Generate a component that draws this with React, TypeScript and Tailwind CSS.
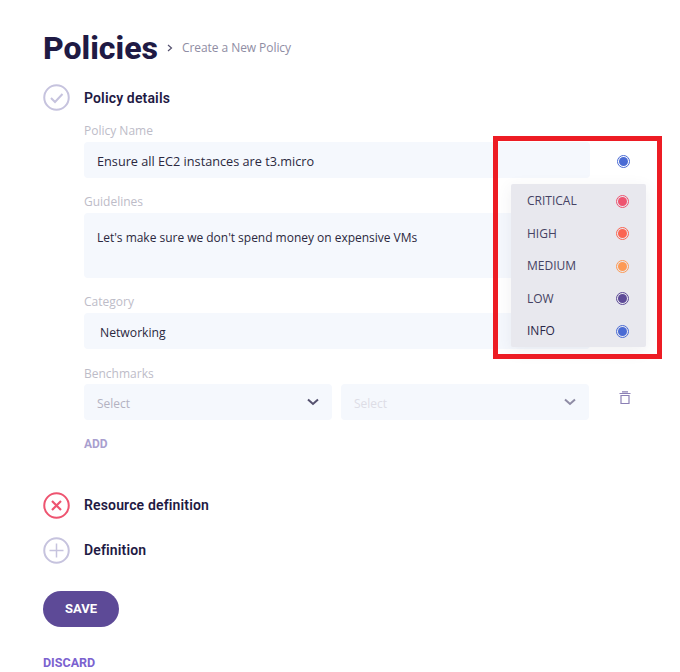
import React from "react";

const bodyFont = "font-['Open_Sans','Noto_Sans',sans-serif]";

function Dot({ ring, fill }: { ring: string; fill: string }) {
  return (
    <span className={`flex h-[13px] w-[13px] items-center justify-center rounded-full border ${ring}`}>
      <span className={`block h-[9px] w-[9px] rounded-full ${fill}`} />
    </span>
  );
}

function Chevron({ color }: { color: string }) {
  return (
    <svg width="12" height="8" viewBox="0 0 12 8" fill="none" stroke={color} strokeWidth="2">
      <path d="M1 1.5 L6 6 L11 1.5" />
    </svg>
  );
}

function SectionHead({ icon, title, className = "", titleClass = "" }: { icon: React.ReactNode; title: string; className?: string; titleClass?: string }) {
  return (
    <div className={`flex h-[27px] items-center gap-[14px] ${className}`}>
      {icon}
      <span className={`font-['Roboto',sans-serif] text-[14px] font-semibold tracking-[0.15px] text-[#1f1a44] ${titleClass}`}>{title}</span>
    </div>
  );
}

function Ring({ color, children }: { color: string; children: React.ReactNode }) {
  return (
    <svg width="27" height="27" viewBox="0 0 27 27" fill="none" stroke={color} className="shrink-0">
      <circle cx="13.5" cy="13.5" r="12.25" strokeWidth="2" />
      {children}
    </svg>
  );
}

function Label({ children }: { children: React.ReactNode }) {
  return <div className="text-[12px] leading-[16px] text-[#bdbcc8]">{children}</div>;
}

const levels = [
  { name: "CRITICAL", ring: "border-[#ee5470]", fill: "bg-[#ee5470]", text: "text-[#454263]" },
  { name: "HIGH", ring: "border-[#fb6552]", fill: "bg-[#fb6552]", text: "text-[#454263]" },
  { name: "MEDIUM", ring: "border-[#fd9a55]", fill: "bg-[#fd9a55]", text: "text-[#454263]" },
  { name: "LOW", ring: "border-[#5d4a97]", fill: "bg-[#5d4a97]", text: "text-[#454263]" },
  { name: "INFO", ring: "border-[#4a6bd4]", fill: "bg-[#4a6bd4]", text: "text-[#2a2648]" },
];

export default function App() {
  return (
    <div className={`relative h-[672px] w-[680px] overflow-hidden bg-white pl-[43px] pt-[29px] ${bodyFont}`}>
      <div className="flex h-[38px] items-center">
        <h1 className="font-['Roboto',sans-serif] text-[32px] font-extrabold leading-[38px] text-[#1f1a44]">Policies</h1>
        <svg width="6" height="8" viewBox="0 0 6 8" fill="none" stroke="#55516f" strokeWidth="1.2" className="ml-[9px] mr-[9px]">
          <path d="M1 1 L4.5 4 L1 7" />
        </svg>
        <span className="text-[12px] tracking-[-0.06px] text-[#8f8da3]">Create a New Policy</span>
      </div>

      <SectionHead
        className="mt-[17px]"
        titleClass="pt-[1px]"
        title="Policy details"
        icon={
          <Ring color="#c6c3de">
            <path d="M8 14 L12 18 L19.5 10" stroke="#c6c3de" strokeWidth="2" />
          </Ring>
        }
      />

      <div className="ml-[41px] w-[506px]">
        <div className="mt-[12px]"><Label>Policy Name</Label></div>
        <div className="mt-[3px] flex h-[36px] items-center rounded-[4px] bg-[#f5f8fd] pl-[13px] pt-[4px] text-[12.7px] text-[#2b2840]">
          Ensure all EC2 instances are t3.micro
        </div>

        <div className="mt-[16px]"><Label>Guidelines</Label></div>
        <div className="mt-[3px] h-[65px] rounded-[4px] bg-[#f5f8fd] pl-[13px] pt-[16px] text-[12px] leading-[18px] tracking-[-0.02px] text-[#2b2840]">
          Let's make sure we don't spend money on expensive VMs
        </div>

        <div className="mt-[16px]"><Label>Category</Label></div>
        <div className="mt-[3px] flex h-[36px] items-center rounded-[4px] bg-[#f5f8fd] pl-[16px] pt-[4px] text-[12.2px] text-[#2b2840]">
          Networking
        </div>

        <div className="mt-[17px]"><Label>Benchmarks</Label></div>
        <div className="mt-[2px] flex gap-[9px]">
          <div className="flex h-[36px] w-[248px] items-center justify-between rounded-[4px] bg-[#f5f8fd] px-[13px] text-[12px] text-[#b3b2c1]">
            <span className="pt-[4px]">Select</span>
            <Chevron color="#55516f" />
          </div>
          <div className="flex h-[36px] w-[248px] items-center justify-between rounded-[4px] bg-[#f5f8fd] px-[13px] text-[12px] text-[#dddde6]">
            <span className="pt-[4px]">Select</span>
            <Chevron color="#8f8ca5" />
          </div>
        </div>
        <div className="mt-[18px] font-['Roboto',sans-serif] text-[12px] font-bold leading-[13px] text-[#a99fcf]">ADD</div>
      </div>

      <SectionHead
        className="mt-[41px]"
        title="Resource definition"
        icon={
          <Ring color="#ee5470">
            <path d="M9 9 L18 18 M18 9 L9 18" strokeWidth="2.2" />
          </Ring>
        }
      />
      <SectionHead
        className="mt-[18px]"
        title="Definition"
        icon={
          <Ring color="#c6c3de">
            <path d="M13.5 6.5 V20.5 M6.5 13.5 H20.5" strokeWidth="1.5" />
          </Ring>
        }
      />

      <button className="mt-[27px] block h-[36px] w-[76px] rounded-full bg-[#5d4a97] font-['Roboto',sans-serif] text-[13px] font-bold text-white">
        SAVE
      </button>
      <div className="mt-[29px] font-['Roboto',sans-serif] text-[12.5px] font-bold leading-[14px] text-[#7b62cf]">DISCARD</div>

      {/* severity indicator, menu and annotation lie over the form */}
      <div className="absolute left-[617px] top-[155px]">
        <Dot ring="border-[#4a6bd4]" fill="bg-[#4a6bd4]" />
      </div>
      <div className="absolute left-[511px] top-[184px] h-[163px] w-[135px] rounded-[2px] bg-[#e8e8ee] pl-[16px] pr-[17px] pt-[1px] shadow-[0_4px_16px_rgba(60,60,90,0.08)]">
        {levels.map((l) => (
          <div key={l.name} className={`flex h-[32.5px] items-center justify-between text-[12px] ${l.text}`}>
            {l.name}
            <Dot ring={l.ring} fill={l.fill} />
          </div>
        ))}
      </div>
      <div className="absolute left-[493px] top-[136px] h-[223px] w-[169px] border-[5px] border-[#ed1c24]" />

      <svg width="12" height="14" viewBox="0 0 12 14" fill="none" stroke="#8b80b5" strokeWidth="1.2" className="absolute left-[619px] top-[391px]">
        <path d="M0.5 2.5 H11.5 M3 0.8 H9 M2 4.5 H10 V12.5 H2 Z" />
      </svg>
    </div>
  );
}
